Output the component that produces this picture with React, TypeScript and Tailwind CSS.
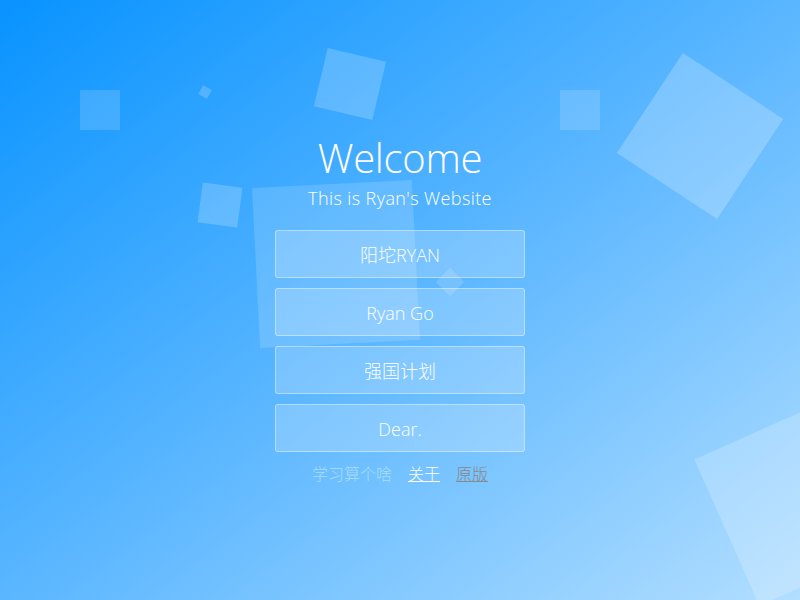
import React from "react";

const squares = [
  { left: 80, top: 90, size: 40, rotate: 0, opacity: 0.15 },
  { left: 560, top: 90, size: 40, rotate: 0, opacity: 0.15 },
  { left: 200, top: 87, size: 10, rotate: 30, opacity: 0.2 },
  { left: 200, top: 185, size: 40, rotate: 7.5, opacity: 0.2 },
  { left: 320, top: 54, size: 60, rotate: 13.3, opacity: 0.2 },
  { left: 640, top: 75.5, size: 120, rotate: 33.4, opacity: 0.22 },
  { left: 256, top: 184, size: 160, rotate: -2.9, opacity: 0.15 },
  { left: 440, top: 272, size: 20, rotate: 45, opacity: 0.15 },
  { left: 720, top: 420, size: 160, rotate: -24, opacity: 0.2 },
];

const links = ["阳坨RYAN", "Ryan Go", "强国计划", "Dear."];

export default function App() {
  return (
    <div className="relative h-[600px] w-[800px] overflow-hidden bg-[linear-gradient(to_bottom_right,#0893ff_0%,#5ab6ff_50%,#b2deff_100%)] font-['Open_Sans','Noto_Sans_CJK_SC',sans-serif] text-white">
      {squares.map((s, i) => (
        <div
          key={i}
          className="absolute bg-white"
          style={{
            left: s.left,
            top: s.top,
            width: s.size,
            height: s.size,
            opacity: s.opacity,
            transform: `rotate(${s.rotate}deg)`,
          }}
        />
      ))}

      <div className="relative flex flex-col items-center pt-[130px] font-light">
        <h1 className="text-[40px] leading-[56px] tracking-[-0.3px]">Welcome</h1>
        <p className="mt-[-1px] text-[18px] leading-[26px] tracking-[0.4px]">
          This is Ryan's Website
        </p>
        <div className="mt-[19px] flex flex-col gap-[10px]">
          {links.map((label) => (
            <a
              key={label}
              href="#"
              className="flex h-[48px] w-[250px] items-center justify-center rounded-[3px] border border-white/40 bg-white/20 pt-[3px] text-[18px] text-white"
            >
              {label}
            </a>
          ))}
        </div>
        <div className="mt-[10px] flex gap-4 text-[16px] leading-[24px]">
          <span className="text-[#a9def5]">学习算个啥</span>
          <a href="#" className="text-white underline">
            关于
          </a>
          <a href="#" className="text-[#888888] underline">
            原版
          </a>
        </div>
      </div>
    </div>
  );
}
